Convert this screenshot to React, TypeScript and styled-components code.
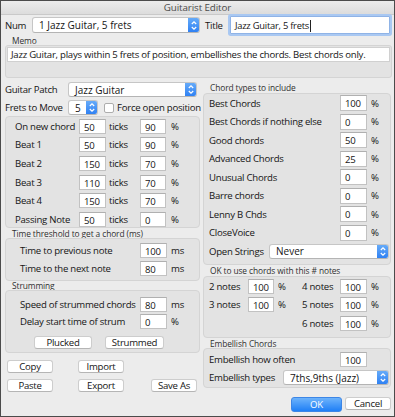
import React from "react";
import styled, { createGlobalStyle } from "styled-components";

const Global = createGlobalStyle`
  html, body { margin: 0; padding: 0; background: #ececec; }
  body { font-family: "Open Sans", "DejaVu Sans", sans-serif; }
  * { box-sizing: border-box; }
`;

const Window = styled.div`
  width: 395px;
  height: 417px;
  border: 1px solid #4b4b4b;
  background: #ececec;
  display: flex;
  flex-direction: column;
  font-family: "Open Sans", sans-serif;
  font-size: 9.6px;
  letter-spacing: -0.25px;
  color: #151515;
  overflow: hidden;
`;

const TitleBar = styled.div`
  height: 14px;
  flex: none;
  background: linear-gradient(#ececec, #dcdcdc);
  border-bottom: 1px solid #c9c9c9;
  display: flex;
  align-items: center;
  justify-content: center;
  font-size: 9.8px;
  letter-spacing: -0.1px;
  color: #4a4a4a;
`;

const Body = styled.div`
  flex: 1;
  display: flex;
  flex-direction: column;
  padding: 0 2px 0 4px;
`;

const Row = styled.div<{ $h?: number; $mt?: number; $pl?: number }>`
  display: flex;
  align-items: center;
  height: ${(p) => p.$h ?? 18.5}px;
  margin-top: ${(p) => p.$mt ?? 0}px;
  padding-left: ${(p) => p.$pl ?? 0}px;
  flex: none;
  white-space: nowrap;
`;

const Label = styled.span<{ $w?: number; $ml?: number }>`
  display: inline-block;
  width: ${(p) => (p.$w ? `${p.$w}px` : "auto")};
  margin-left: ${(p) => p.$ml ?? 0}px;
  flex: none;
  white-space: nowrap;
`;

const Unit = styled.span<{ $ml?: number; $w?: number }>`
  margin-left: ${(p) => p.$ml ?? 4}px;
  width: ${(p) => (p.$w ? `${p.$w}px` : "auto")};
  flex: none;
`;

const Caption = styled.div<{ $h: number }>`
  height: ${(p) => p.$h}px;
  padding-left: 7px;
  font-size: 8.4px;
  letter-spacing: -0.1px;
  color: #303030;
  display: flex;
  align-items: center;
  flex: none;
`;

const Group = styled.div<{ $h: number; $pt?: number; $pl?: number }>`
  height: ${(p) => p.$h}px;
  padding-top: ${(p) => p.$pt ?? 0}px;
  padding-left: ${(p) => p.$pl ?? 5}px;
  background: #e3e3e3;
  border: 1px solid #d4d4d4;
  border-radius: 4px;
  display: flex;
  flex-direction: column;
  flex: none;
`;

const Field = styled.div<{ $w: number; $h?: number }>`
  width: ${(p) => p.$w}px;
  height: ${(p) => p.$h ?? 15}px;
  background: #fff;
  border: 1px solid #c2c2c2;
  border-top-color: #b0b0b0;
  padding: 2px 0 0 4px;
  line-height: 12px;
  flex: none;
  overflow: hidden;
`;

const FocusField = styled.div`
  width: 160px;
  height: 18px;
  background: #fff;
  border: 1px solid #8fb3e6;
  box-shadow: 0 0 0 2px #a9c8f2;
  border-radius: 1px;
  padding: 1px 0 0 4px;
  font-size: 9.4px;
  line-height: 13px;
  flex: none;
  display: flex;
  align-items: center;
`;

const Caret = styled.span`
  display: inline-block;
  width: 1px;
  height: 12px;
  background: #222;
  margin-left: 1px;
`;

const SelectBox = styled.div<{ $w: number; $h?: number }>`
  width: ${(p) => p.$w}px;
  height: ${(p) => p.$h ?? 15}px;
  background: #fff;
  border: 1px solid #c6c6c6;
  border-bottom-color: #b4b4b4;
  border-radius: 3px;
  display: flex;
  align-items: center;
  padding-left: 6px;
  font-size: 10px;
  letter-spacing: 0;
  flex: none;
  overflow: hidden;
`;

const SelectText = styled.span`
  flex: 1;
`;

const Stepper = styled.span`
  width: 12px;
  align-self: stretch;
  margin: -1px -1px -1px 0;
  background: linear-gradient(#6aaef9, #2b7ef3);
  border-radius: 0 3px 3px 0;
  display: flex;
  align-items: center;
  justify-content: center;
  flex: none;
`;

const Select = ({ w, h, text }: { w: number; h?: number; text: string }) => (
  <SelectBox $w={w} $h={h}>
    <SelectText>{text}</SelectText>
    <Stepper>
      <svg width="8" height="11" viewBox="0 0 8 11">
        <path d="M1.8 4 L4 1.8 L6.2 4" fill="none" stroke="#fff" strokeWidth="1.2" />
        <path d="M1.8 7 L4 9.2 L6.2 7" fill="none" stroke="#fff" strokeWidth="1.2" />
      </svg>
    </Stepper>
  </SelectBox>
);

const CheckBox = styled.span`
  width: 10px;
  height: 10px;
  background: #fff;
  border: 1px solid #adadad;
  border-radius: 2px;
  margin: 0 3px 0 6px;
  flex: none;
`;

const Button = styled.div<{ $w: number; $ml?: number }>`
  width: ${(p) => p.$w}px;
  height: 13px;
  margin-left: ${(p) => p.$ml ?? 0}px;
  background: #fff;
  border: 1px solid #cdcdcd;
  border-bottom-color: #b5b5b5;
  border-radius: 3px;
  display: flex;
  align-items: center;
  justify-content: center;
  flex: none;
`;

const PrimaryButton = styled(Button)`
  height: 15px;
  background: linear-gradient(#6db3fb, #1f7ff6);
  border-color: #3d86e6;
  color: #fff;
`;

const Columns = styled.div`
  display: flex;
  gap: 3px;
  margin-top: 3px;
`;

const Column = styled.div<{ $w: number }>`
  width: ${(p) => p.$w}px;
  display: flex;
  flex-direction: column;
  flex: none;
`;

const MemoInput = styled.div`
  height: 15px;
  background: #fff;
  border: 1px solid #d0d0d0;
  padding: 1px 0 0 3px;
  font-size: 9.6px;
  line-height: 12px;
  white-space: nowrap;
  overflow: hidden;
`;

const MemoGroup = styled.div`
  height: 33px;
  background: #e3e3e3;
  border: 1px solid #d4d4d4;
  border-radius: 3px;
  padding: 1px;
  flex: none;
`;

const Footer = styled.div`
  display: flex;
  justify-content: flex-end;
  margin-top: 9px;
  gap: 3px;
`;

const ticks = [
  ["On new chord", "50", "90"],
  ["Beat 1", "50", "90"],
  ["Beat 2", "150", "70"],
  ["Beat 3", "110", "70"],
  ["Beat 4", "150", "70"],
  ["Passing Note", "50", "0"],
];

const chordTypes = [
  ["Best Chords", "100"],
  ["Best Chords if nothing else", "0"],
  ["Good chords", "50"],
  ["Advanced Chords", "25"],
  ["Unusual Chords", "0"],
  ["Barre chords", "0"],
  ["Lenny B Chds", "0"],
  ["CloseVoice", "0"],
];

export default function App() {
  return (
    <Window>
      <Global />
      <TitleBar>Guitarist Editor</TitleBar>
      <Body>
        <Row $h={20}>
          <Label $w={27}>Num</Label>
          <Select w={168} h={16} text="1 Jazz Guitar, 5 frets" />
          <Label $w={25} $ml={5}>Title</Label>
          <FocusField>
            Jazz Guitar, 5 frets
            <Caret />
          </FocusField>
        </Row>
        <Caption $h={10}>Memo</Caption>
        <MemoGroup>
          <MemoInput>Jazz Guitar, plays within 5 frets of position, embellishes the chords. Best chords only.</MemoInput>
        </MemoGroup>
        <Columns>
          <Column $w={195}>
            <Row $h={17}>
              <Label $w={63}>Guitar Patch</Label>
              <Select w={129} text="Jazz Guitar" />
            </Row>
            <Row $h={17} $mt={1}>
              <Label $w={63}>Frets to Move</Label>
              <Select w={30} text="5" />
              <CheckBox />
              <Label>Force open position</Label>
            </Row>
            <Group $h={112} $pl={9}>
              {ticks.map(([l, a, b]) => (
                <Row key={l} $h={18.6}>
                  <Label $w={64}>{l}</Label>
                  <Field $w={27}>{a}</Field>
                  <Unit $ml={3} $w={31}>ticks</Unit>
                  <Field $w={26}>{b}</Field>
                  <Unit $ml={5}>%</Unit>
                </Row>
              ))}
            </Group>
            <Caption $h={10}>Time threshold to get a chord (ms)</Caption>
            <Group $h={43} $pt={2} $pl={14}>
              <Row>
                <Label $w={120}>Time to previous note</Label>
                <Field $w={27}>100</Field>
                <Unit>ms</Unit>
              </Row>
              <Row>
                <Label $w={120}>Time to the next note</Label>
                <Field $w={27}>80</Field>
                <Unit>ms</Unit>
              </Row>
            </Group>
            <Caption $h={9}>Strumming</Caption>
            <Group $h={63} $pt={5} $pl={14}>
              <Row $h={17}>
                <Label $w={120}>Speed of strummed chords</Label>
                <Field $w={27}>80</Field>
                <Unit>ms</Unit>
              </Row>
              <Row $h={17}>
                <Label $w={120}>Delay start time of strum</Label>
                <Field $w={27}>0</Field>
                <Unit>%</Unit>
              </Row>
              <Row $h={13} $mt={6} $pl={14}>
                <Button $w={58}>Plucked</Button>
                <Button $w={59} $ml={13}>Strummed</Button>
              </Row>
            </Group>
            <Row $h={13} $mt={7} $pl={2}>
              <Button $w={46}>Copy</Button>
              <Button $w={46} $ml={25}>Import</Button>
            </Row>
            <Row $h={13} $mt={6} $pl={2}>
              <Button $w={46}>Paste</Button>
              <Button $w={46} $ml={25}>Export</Button>
              <Button $w={46} $ml={27}>Save As</Button>
            </Row>
          </Column>
          <Column $w={188}>
            <Caption $h={12}>Chord types to include</Caption>
            <Group $h={172}>
              {chordTypes.map(([l, v]) => (
                <Row key={l}>
                  <Label $w={131}>{l}</Label>
                  <Field $w={27} $h={16}>{v}</Field>
                  <Unit>%</Unit>
                </Row>
              ))}
              <Row>
                <Label $w={60}>Open Strings</Label>
                <Select w={120} text="Never" />
              </Row>
            </Group>
            <Caption $h={11}>OK to use chords with this # notes</Caption>
            <Group $h={62}>
              <Row>
                <Label $w={39}>2 notes</Label>
                <Field $w={26}>100</Field>
                <Unit $w={24}>%</Unit>
                <Label $w={38}>4 notes</Label>
                <Field $w={27}>100</Field>
                <Unit>%</Unit>
              </Row>
              <Row>
                <Label $w={39}>3 notes</Label>
                <Field $w={26}>100</Field>
                <Unit $w={24}>%</Unit>
                <Label $w={38}>5 notes</Label>
                <Field $w={27}>100</Field>
                <Unit>%</Unit>
              </Row>
              <Row $pl={93}>
                <Label $w={38}>6 notes</Label>
                <Field $w={27}>100</Field>
                <Unit>%</Unit>
              </Row>
            </Group>
            <Caption $h={10}>Embellish Chords</Caption>
            <Group $h={40} $pt={1}>
              <Row>
                <Label $w={131}>Embellish how often</Label>
                <Field $w={27}>100</Field>
              </Row>
              <Row>
                <Label $w={74}>Embellish types</Label>
                <Select w={106} text="7ths,9ths (Jazz)" />
              </Row>
            </Group>
            <Footer>
              <PrimaryButton $w={51}>OK</PrimaryButton>
              <Button $w={46}>Cancel</Button>
            </Footer>
          </Column>
        </Columns>
      </Body>
    </Window>
  );
}
